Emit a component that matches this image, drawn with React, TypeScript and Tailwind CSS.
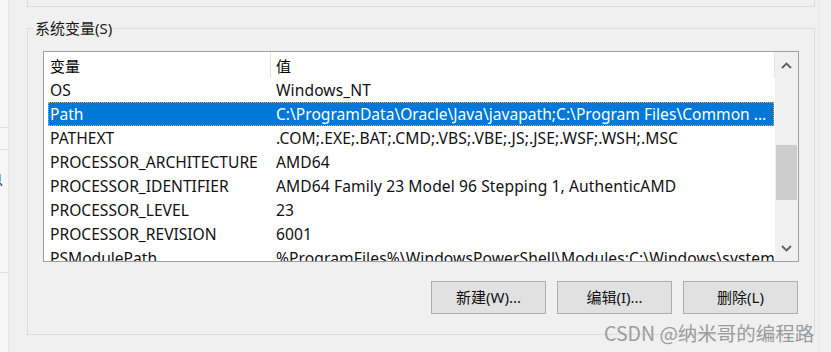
import React from "react";

const rows: { name: string; value: string; selected?: boolean }[] = [
  { name: "OS", value: "Windows_NT" },
  {
    name: "Path",
    value: "C:\\ProgramData\\Oracle\\Java\\javapath;C:\\Program Files\\Common ...",
    selected: true,
  },
  { name: "PATHEXT", value: ".COM;.EXE;.BAT;.CMD;.VBS;.VBE;.JS;.JSE;.WSF;.WSH;.MSC" },
  { name: "PROCESSOR_ARCHITECTURE", value: "AMD64" },
  { name: "PROCESSOR_IDENTIFIER", value: "AMD64 Family 23 Model 96 Stepping 1, AuthenticAMD" },
  { name: "PROCESSOR_LEVEL", value: "23" },
  { name: "PROCESSOR_REVISION", value: "6001" },
  {
    name: "PSModulePath",
    value: "%ProgramFiles%\\WindowsPowerShell\\Modules;C:\\Windows\\system32\\WindowsPowerShell\\v1.0\\Modules",
  },
];

const font = { fontFamily: '"Noto Sans", "Noto Sans CJK SC", sans-serif' };

function Chevron({ up }: { up?: boolean }) {
  return (
    <svg width="11" height="7" viewBox="0 0 11 7" className="block">
      <path
        d={up ? "M1 6 L5.5 1.5 L10 6" : "M1 1 L5.5 5.5 L10 1"}
        fill="none"
        stroke="#606060"
        strokeWidth="1.8"
      />
    </svg>
  );
}

export default function App() {
  return (
    <div
      className="w-[831px] h-[352px] bg-[#f0f0f0] overflow-hidden flex text-black relative"
      style={font}
    >
      {/* left background window strip */}
      <div className="w-[8px] h-full bg-[#f6f6f6] flex flex-col overflow-hidden shrink-0">
        <div className="h-[127px]" />
        <div className="h-px bg-[#dedede]" />
        <div className="h-[21px]" />
        <div className="h-px bg-[#dedede]" />
        <div className="h-[22px]" />
        <div className="h-[16px] text-[14px] leading-[16px] ml-[-11px] whitespace-nowrap text-[#222]">息</div>
        <div className="h-[84px]" />
        <div className="h-px bg-[#dedede]" />
      </div>
      <div className="w-[2px] h-full bg-gradient-to-r from-[#e2e2e2] to-[#eeeeee] shrink-0" />

      {/* main */}
      <div className="w-[809px] h-full pl-[17px] border-r border-[#e6e6e6] flex flex-col shrink-0">
        {/* previous group box remnant */}
        <div className="w-[788px] h-[7px] border-x border-b border-[#dcdcdc]" />

        {/* system variables group box */}
        <div className="mt-[21px] w-[788px] h-[307px] border border-[#dcdcdc] relative pl-[15px] pt-[22px]">
          <div className="absolute left-[6px] top-[-11px] px-px bg-[#f0f0f0] text-[15px] leading-[20px] text-[#1a1a1a] whitespace-nowrap">
            系统变量(S)
          </div>

          {/* list view */}
          <div className="w-[756px] h-[211px] border border-[#a0a0a0] bg-white flex overflow-hidden">
            <div className="w-[731px] flex flex-col overflow-hidden">
              {/* header */}
              <div className="h-[26px] flex text-[15px] shrink-0">
                <div className="w-[227px] h-full flex items-center pl-[6px] pt-[2px] border-r border-[#e5e5e5]">
                  变量
                </div>
                <div className="flex-1 h-full flex items-center pl-[5px] pt-[2px] border-r border-[#e5e5e5]">
                  值
                </div>
              </div>
              {rows.map((r) => (
                <div
                  key={r.name}
                  className={
                    "ml-[4px] w-[726px] h-[24px] shrink-0 flex items-center text-[15.6px] leading-[20px] pb-px whitespace-nowrap overflow-hidden " +
                    (r.selected
                      ? "bg-[#0078d7] text-white border border-dotted border-[#e9a55a]"
                      : "text-[#111]")
                  }
                >
                  <div className={"w-[228px] shrink-0 " + (r.selected ? "pl-px" : "pl-[2px]")}>
                    {r.name}
                  </div>
                  <div className={"overflow-hidden " + (r.selected ? "ml-[-1px]" : "tracking-[0.1px]")}>{r.value}</div>
                </div>
              ))}
            </div>

            {/* scrollbar */}
            <div className="w-[23px] h-full bg-[#f0f0f0] flex flex-col items-center">
              <div className="h-[24px] w-full flex items-center justify-center pt-[2px]">
                <Chevron up />
              </div>
              <div className="h-[69px]" />
              <div className="w-[21px] h-[55px] bg-[#cdcdcd]" />
              <div className="flex-1" />
              <div className="h-[24px] w-full flex items-center justify-center pb-[2px]">
                <Chevron />
              </div>
            </div>
          </div>

          {/* buttons */}
          <div className="mt-[19px] w-[756px] pr-px flex justify-end gap-[11px]">
            {["新建(W)...", "编辑(I)...", "删除(L)"].map((t) => (
              <div
                key={t}
                className="w-[115px] h-[33px] bg-[#e1e1e1] border border-[#adadad] flex items-center justify-center text-[15px] text-[#111] whitespace-nowrap"
              >
                {t}
              </div>
            ))}
          </div>
        </div>
      </div>

      {/* CSDN watermark overlay */}
      <div
        className="absolute left-[604px] top-[320px] text-[19.5px] leading-[26px] text-[#9c9c9c] whitespace-nowrap"
        style={{ fontFamily: '"Noto Sans CJK SC", "Noto Sans", sans-serif' }}
      >
        CSDN @纳米哥的编程路
      </div>
    </div>
  );
}
